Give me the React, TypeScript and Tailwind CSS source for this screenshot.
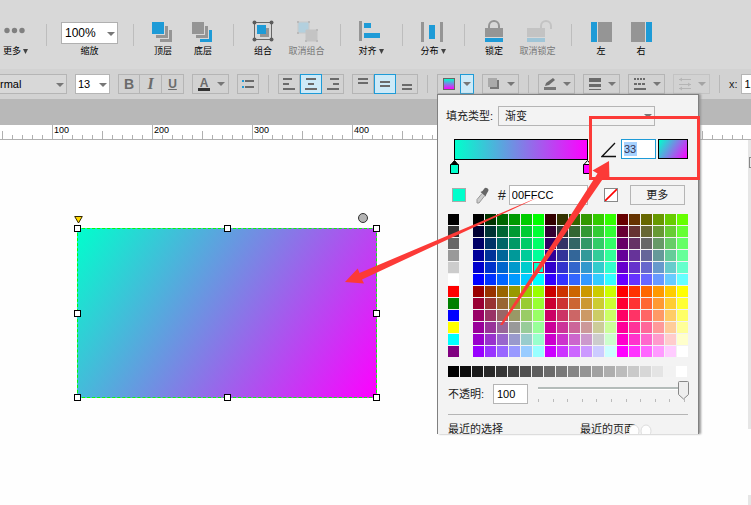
import React from "react";

type Kids = { children?: React.ReactNode };

const GRAY = "#959595";
const BLUE = "#1e9bd7";
const INK = "#6b6b6b";

function Divider() {
  return <div className="mt-[5px] mr-[9px] ml-[10px] h-[22px] w-px shrink-0 bg-[#bdbdbd]" />;
}

function Tool({ label, width = "w-10", menu, disabled, children }: Kids & { label: string; width?: string; menu?: boolean; disabled?: boolean }) {
  return (
    <button type="button" disabled={disabled} className={`flex shrink-0 flex-col items-center gap-px ${width}`}>
      <svg width="28" height="24" viewBox="0 0 28 24" aria-hidden="true" className={disabled ? "opacity-30" : ""}>
        {children}
      </svg>
      <span className={`flex items-center gap-[2px] text-[9px] leading-[14px] whitespace-nowrap ${disabled ? "text-[#777]" : "text-black"}`}>
        {label}
        {menu && <Caret small color="#444" />}
      </span>
    </button>
  );
}

function TopBar() {
  return (
    <header className="flex h-[69px] items-start overflow-hidden bg-[#d8d8d8] pt-[19px]">
      <Tool label="更多" menu width="w-9 pr-[5px]">
        <g fill="#808080">
          <circle cx="5" cy="11.500" r="2.700" />
          <circle cx="12.500" cy="11.500" r="2.700" />
          <circle cx="20" cy="11.500" r="2.700" />
        </g>
      </Tool>
      <Divider />
      <label className="flex w-[67px] shrink-0 flex-col items-center pt-[3px] text-[9px] leading-[14px] text-black">
        <span className="relative flex h-[22px] w-[57px]">
          <select className="w-full appearance-none border border-[#b0b0b0] bg-white pl-[3px] text-xs leading-4 text-black">
            <option>100%</option>
          </select>
          <Caret className="absolute top-[10px] right-[3px]" />
        </span>
        缩放
      </label>
      <Divider />
      <Tool label="顶层">
        <path d="M7 16h9V7h3v12H7z" fill={GRAY} />
        <path d="M11 20h9v-9h3v12H11z" fill={GRAY} />
        <path d="M3 3h12v12H3z" fill={BLUE} />
      </Tool>
      <Tool label="底层">
        <path d="M7 16h9V7h3v12H7z" fill={GRAY} />
        <path d="M11 20h9v-9h3v12H11z" fill={BLUE} />
        <path d="M3 3h12v12H3z" fill={GRAY} />
      </Tool>
      <Divider />
      <Tool label="组合">
        <path d="M11 9h9v9h-9z" fill={GRAY} />
        <path d="M8 6h9v9H8z" fill={BLUE} />
        <path d="M5.500 3.500h17v17h-17z" fill="none" stroke="#666" />
        <g fill="#5c5c5c">
          <circle cx="5.500" cy="3.500" r="2" />
          <circle cx="22.500" cy="3.500" r="2" />
          <circle cx="5.500" cy="20.500" r="2" />
          <circle cx="22.500" cy="20.500" r="2" />
        </g>
      </Tool>
      <Tool label="取消组合" width="w-[47px]" disabled>
        <path d="M5 3h11v11H5z" fill="#60c0ec" stroke="#aaa" />
        <path d="M13 11h11v11H13z" fill="#999" stroke="#999" />
        <path d="M4 2h2v2H4zM15 2h2v2h-2zM4 13h2v2H4zM23 10h2v2h-2zM12 21h2v2h-2zM23 21h2v2h-2z" fill="#777" />
      </Tool>
      <Divider />
      <Tool label="对齐" menu width="w-[42px]">
        <path d="M2 2h3v20H2z" fill={GRAY} />
        <path d="M7 4h7v5H7zM7 14h16v5H7z" fill={BLUE} />
      </Tool>
      <Divider />
      <Tool label="分布" menu width="w-[42px]">
        <path d="M2 3h3v20H2zM21 3h3v20h-3z" fill={GRAY} />
        <path d="M10 6h6v14h-6z" fill={BLUE} />
      </Tool>
      <Divider />
      <Tool label="锁定">
        <path d="M9 10V7a5 5 0 0 1 10 0v3" fill="none" stroke={GRAY} strokeWidth="2" />
        <path d="M5 9h18v9H5z" fill={GRAY} />
        <path d="M5 19h18v4H5z" fill={BLUE} />
      </Tool>
      <Tool label="取消锁定" width="w-[47px]" disabled>
        <path d="M17 10V7a5 5 0 0 1 10 0v3" fill="none" stroke={GRAY} strokeWidth="2" />
        <path d="M3 9h18v9H3z" fill={GRAY} />
        <path d="M3 19h18v4H3z" fill={BLUE} />
      </Tool>
      <Divider />
      <Tool label="左">
        <path d="M4 3h6v20H4z" fill={BLUE} />
        <path d="M11 3h14v20H11z" fill={GRAY} />
      </Tool>
      <Tool label="右">
        <path d="M4 3h14v20H4z" fill={GRAY} />
        <path d="M19 3h6v20h-6z" fill={BLUE} />
      </Tool>
    </header>
  );
}

function Caret({ className = "", color = "#777", small }: { className?: string; color?: string; small?: boolean }) {
  return (
    <svg width={small ? 5 : 8} height={small ? 5 : 4} viewBox="0 0 8 4" preserveAspectRatio="none" aria-hidden="true" className={`pointer-events-none shrink-0 ${className}`}>
      <path d="M0 0h8L4 4z" fill={color} />
    </svg>
  );
}

function Separator() {
  return <div className="mx-px h-[18px] w-px shrink-0 bg-[#b8b8b8]" />;
}

function Segment({ label, active, first, children }: Kids & { label: string; active?: boolean; first?: boolean }) {
  const look = active ? "border border-[#1e9bd7] bg-[#cdeaf8]" : first ? "border border-[#b5b5b5]" : "border-y border-r border-[#b5b5b5]";
  return (
    <button type="button" aria-label={label} className={`flex h-5 w-[22px] shrink-0 items-center justify-center text-[#6b6b6b] ${look}`}>
      {children}
    </button>
  );
}

function Lines({ d }: { d: string }) {
  return (
    <svg width="14" height="14" viewBox="0 0 14 14" aria-hidden="true" className="shrink-0">
      <path d={d} stroke={INK} strokeWidth="2" fill="none" />
    </svg>
  );
}

function MenuButton({ label, disabled, children }: Kids & { label: string; disabled?: boolean }) {
  return (
    <button type="button" aria-label={label} disabled={disabled} className={`flex h-5 w-[37px] shrink-0 items-center justify-between border border-[#b5b5b5] pr-[3px] pl-1 ${disabled ? "opacity-50" : ""}`}>
      {children}
      <Caret />
    </button>
  );
}

function FormatBar() {
  return (
    <div className="flex h-[30px] items-center gap-2 overflow-hidden bg-[#d2d2d2]">
      <div className="relative flex h-5 w-[67px] shrink-0">
        <select aria-label="字型" className="w-full appearance-none border-y border-r border-[#b5b5b5] bg-[#d8d8d8] text-[11px] text-black">
          <option>rmal</option>
        </select>
        <Caret className="absolute top-[9px] right-[3px]" />
      </div>
      <div className="relative flex h-5 w-[35px] shrink-0">
        <select aria-label="字号" className="w-full appearance-none border border-[#b5b5b5] bg-white pl-[2px] text-[11px] text-black">
          <option>13</option>
        </select>
        <Caret className="absolute top-[9px] right-[3px]" />
      </div>
      <div className="flex">
        <Segment label="粗体" first><b className="text-sm">B</b></Segment>
        <Segment label="斜体"><i className="font-['Liberation_Serif',serif] text-base font-bold">I</i></Segment>
        <Segment label="下划线"><span className="text-xs font-bold underline">U</span></Segment>
      </div>
      <MenuButton label="文字颜色">
        <span className="ml-px flex h-[13px] w-3 items-center justify-center border-b-3 border-[#333] text-xs leading-3 font-bold text-[#6b6b6b]">A</span>
      </MenuButton>
      <Segment label="项目符号" first>
        <svg width="14" height="14" viewBox="0 0 14 14" aria-hidden="true">
          <path d="M1 4h2M1 10h2" stroke={BLUE} strokeWidth="2" />
          <path d="M4 4h9M4 10h9" stroke={INK} strokeWidth="2" />
        </svg>
      </Segment>
      <Separator />
      <div className="flex">
        <Segment label="左对齐" first><Lines d="M1 2h9M1 7h6M1 12h12" /></Segment>
        <Segment label="居中" active><Lines d="M2 2h10M4 7h6M1 12h12" /></Segment>
        <Segment label="右对齐"><Lines d="M4 2h9M7 7h6M1 12h12" /></Segment>
      </div>
      <div className="flex">
        <Segment label="顶部对齐" first><Lines d="M2 2h10M2 6h10" /></Segment>
        <Segment label="垂直居中" active><Lines d="M2 5h10M2 9h10" /></Segment>
        <Segment label="底部对齐"><Lines d="M2 8h10M2 12h10" /></Segment>
      </div>
      <Separator />
      <div className="flex shrink-0">
        <button type="button" aria-label="填充颜色" className="flex h-5 w-[23px] items-center justify-center border-y border-l border-[#b5b5b5]">
          <span className="h-3 w-3 border border-[#666] bg-[linear-gradient(#00ffcc,#ff00ff)]" />
        </button>
        <button type="button" aria-label="填充选项" className="flex h-5 w-[14px] items-center justify-center border border-[#1e9bd7] bg-[#cdeaf8]">
          <Caret />
        </button>
      </div>
      <MenuButton label="阴影">
        <svg width="14" height="14" viewBox="0 0 14 14" aria-hidden="true">
          <path d="M3 3h9v9H3z" fill="#777" />
          <path d="M1 1h9v9H1z" fill="#aaa" />
        </svg>
      </MenuButton>
      <Separator />
      <MenuButton label="线条颜色">
        <svg width="14" height="14" viewBox="0 0 14 14" aria-hidden="true">
          <path d="M1 10h12v3H1z" fill="#777" />
          <path d="M2 9l1-3L10 1l2 2-6 5z" fill={INK} />
        </svg>
      </MenuButton>
      <MenuButton label="线宽">
        <svg width="14" height="14" viewBox="0 0 14 14" aria-hidden="true">
          <path d="M1 1h12v4H1zM1 7h12v3H1zM1 12h12v1H1z" fill={INK} />
        </svg>
      </MenuButton>
      <MenuButton label="线型">
        <svg width="14" height="14" viewBox="0 0 14 14" aria-hidden="true">
          <path d="M1 2h12" stroke={INK} strokeWidth="2" strokeDasharray="2 1" />
          <path d="M1 7h12" stroke={INK} strokeWidth="2" strokeDasharray="3 1" />
          <path d="M1 12h12" stroke={INK} strokeWidth="2" />
        </svg>
      </MenuButton>
      <MenuButton label="箭头样式" disabled>
        <svg width="14" height="14" viewBox="0 0 14 14" aria-hidden="true" fill="none" stroke="#999">
          <path d="M1 2.500h12M1 7.500h12M1 11.500h12M4 1L2 2.500 4 4M10 6l2 1.500L10 9M4 10l-2 1.500L4 13" />
        </svg>
      </MenuButton>
      <Separator />
      <label className="flex shrink-0 items-center gap-[3px] text-[11px] text-[#222]">
        x:
        <input defaultValue="127" className="h-5 w-10 border border-[#b5b5b5] bg-white px-[3px] text-[11px] text-black" />
      </label>
    </div>
  );
}

function Ruler() {
  const [width, setWidth] = React.useState(window.innerWidth);
  React.useEffect(() => {
    const update = () => setWidth(window.innerWidth);
    window.addEventListener("resize", update);
    return () => window.removeEventListener("resize", update);
  }, []);
  const ticks = Array.from({ length: Math.floor(width / 10) }, (_, i) => i);
  return (
    <div className="flex h-[15px] items-end overflow-hidden border-b border-[#b0b0b0] bg-white pl-[2px]">
      {ticks.map((i) => {
        const major = i % 10 === 5;
        const height = major ? "h-[14px]" : i % 5 === 0 ? "h-2" : "h-1";
        return (
          <div key={i} className={`w-[10px] shrink-0 border-l border-[#b0b0b0] ${height}`}>
            {major && <span className="block w-6 pl-px text-[9px] leading-[11px] text-black">{(i + 5) * 10}</span>}
          </div>
        );
      })}
    </div>
  );
}

function Handle({ place }: { place: string }) {
  return <span className={`absolute h-[7px] w-[7px] border border-black bg-white ${place}`} />;
}

function GradientShape() {
  return (
    <div className="absolute top-[88px] left-[77px] h-[170px] w-[300px] border border-dashed border-[#00ff00] bg-[linear-gradient(123deg,#00ffcc,#ff00ff)] bg-origin-border">
      <Handle place="-top-1 -left-1" />
      <Handle place="-top-1 left-[146px]" />
      <Handle place="-top-1 -right-1" />
      <Handle place="top-[81px] -left-1" />
      <Handle place="top-[81px] -right-1" />
      <Handle place="-bottom-1 -left-1" />
      <Handle place="-bottom-1 left-[146px]" />
      <Handle place="-right-1 -bottom-1" />
      <svg width="9" height="8" viewBox="0 0 9 8" aria-hidden="true" className="absolute -top-[13px] -left-1">
        <path d="M.7.500h7.600L4.500 7z" fill="#ffd800" stroke="#332800" />
      </svg>
      <span className="absolute -top-4 left-[280px] h-[10px] w-[10px] rounded-full border border-[#333] bg-[#b4b4b4]" />
    </div>
  );
}

const STEPS = ["00", "33", "66", "99", "cc", "ff"];
const BASICS = ["#000000", "#333333", "#666666", "#999999", "#cccccc", "#ffffff", "#ff0000", "#008000", "#0000ff", "#ffff00", "#00ffff", "#800080"];
const PALETTE = Array.from({ length: 12 }, (_, row) =>
  Array.from({ length: 18 }, (_, col) => `#${STEPS[Math.floor(col / 6) + (row > 5 ? 3 : 0)]}${STEPS[col % 6]}${STEPS[row % 6]}`),
);
const GRAYS = Array.from({ length: 20 }, (_, i) => {
  const v = Math.round((i * 255) / 19);
  return `rgb(${v}, ${v}, ${v})`;
});
const SLIDER_TICKS = Array.from({ length: 11 }, (_, i) => i * 10);

function Swatch({ color, selected }: { color: string; selected?: boolean }) {
  return <button type="button" aria-label={color} className={`h-[11px] w-[11px] ${selected ? "border border-[#c81e32]" : ""}`} style={{ backgroundColor: color }} />;
}

function Stop({ fill, tip, place }: { fill: string; tip: string; place: string }) {
  return (
    <svg width="9" height="14" viewBox="0 0 9 14" aria-hidden="true" className={`absolute top-5 ${place}`}>
      <path d="M4.500.500L8 4.500H1z" fill={tip} stroke="#000" />
      <path d="M.500 4.500h8v9h-8z" fill={fill} stroke="#000" />
    </svg>
  );
}

function FillPanel() {
  return (
    <section aria-label="填充" className="absolute top-[94px] left-[437px] h-[340px] w-[262px] overflow-hidden border-t border-r border-l border-[#808080] bg-[#f3f3f3] pr-[10px] pl-[10px] text-[11px] text-[#222] shadow-[2px_0_2px_#999]">
      <label className="mt-[11px] -ml-[2px] flex h-5 items-center">
        <span className="w-[52px] whitespace-nowrap">填充类型:</span>
        <span className="relative flex h-5 w-[157px]">
          <select className="w-full appearance-none border border-[#b5b5b5] bg-[#f3f3f3] pl-[6px] text-[11px]">
            <option>渐变</option>
          </select>
          <Caret className="absolute top-2 right-[3px]" />
        </span>
      </label>
      <div className="mt-[13px] flex h-[35px] items-start">
        <div className="relative ml-[6px] h-[21px] w-[134px] shrink-0 border border-black bg-[linear-gradient(90deg,#00ffcc,#ff00ff)]">
          <Stop fill="#00ffcc" tip="#000" place="-left-[5px]" />
          <Stop fill="#ff00ff" tip="#fff" place="-right-[5px]" />
        </div>
        <svg width="15" height="16" viewBox="0 0 15 16" aria-hidden="true" className="mt-[3px] ml-[13px] shrink-0">
          <path d="M14 1L1 14.500h14" fill="none" stroke="#111" strokeWidth="1.300" />
        </svg>
        <label className="ml-[5px] flex h-5 w-[35px] shrink-0 items-center border border-[#1e9bd7] bg-white pl-[2px]">
          <input aria-label="角度" defaultValue="33" size={1} className="h-[14px] w-[13px] bg-[#a6d2ff] text-[11px] text-[#335]" />
        </label>
        <span className="ml-[2px] h-5 w-[30px] shrink-0 border border-black bg-[linear-gradient(123deg,#00ffcc,#ff00ff)]" />
      </div>
      <div className="mt-[11px] flex h-5 items-center">
        <span className="ml-1 h-[14px] w-[14px] shrink-0 border border-[#aaa] bg-[#00ffcc]" />
        <svg width="14" height="17" viewBox="0 0 14 17" aria-hidden="true" className="ml-[9px] shrink-0">
          <path d="M7 6.500L2 12.500V16h2l5.500-7" fill="#ccc" stroke="#999" />
          <path d="M5.500 5l5 4.500 1-2.500 1.500-2.500a2.300 2.300 0 0 0-4-2.500L7.500 4z" fill="#666" />
        </svg>
        <label className="ml-[9px] flex shrink-0 items-center gap-[3px] text-sm">
          #
          <input defaultValue="00FFCC" className="h-5 w-[79px] border border-[#b5b5b5] bg-white pl-[2px] text-[11px] text-black" />
        </label>
        <button type="button" aria-label="无填充" className="ml-4 h-[14px] w-[14px] shrink-0 border border-[#888] bg-white">
          <svg width="12" height="12" viewBox="0 0 12 12" aria-hidden="true">
            <path d="M0 12L12 0" stroke="#f00" strokeWidth="1.600" />
          </svg>
        </button>
        <button type="button" className="ml-3 h-5 w-[55px] shrink-0 border border-[#b5b5b5]">更多</button>
      </div>
      <div className="mt-[9px] flex gap-[14px]">
        <div className="grid gap-px">
          {BASICS.map((c) => <Swatch key={c} color={c} />)}
        </div>
        <div className="grid grid-cols-[repeat(18,11px)] gap-px">
          {PALETTE.flatMap((row, r) => row.map((c, i) => <Swatch key={`${r}-${i}`} color={c} selected={r === 4 && i === 5} />))}
        </div>
      </div>
      <div className="mt-[9px] flex gap-px">
        {GRAYS.map((c) => <Swatch key={c} color={c} />)}
      </div>
      <div className="mt-[7px] flex h-5 items-center">
        <label htmlFor="opacity" className="w-[45px] shrink-0 whitespace-nowrap">不透明:</label>
        <input id="opacity" defaultValue="100" className="h-5 w-[35px] shrink-0 border border-[#b5b5b5] bg-white pl-[3px] text-[11px] text-black" />
        <div className="relative ml-[10px] h-5 w-[151px] shrink-0">
          <div className="mt-[3px] h-[3px] w-[146px] border-t-2 border-[#b4bcba] bg-white" />
          <div className="mt-[9px] flex w-[147px] justify-between">
            {SLIDER_TICKS.map((t) => <span key={t} className="h-[3px] w-px bg-[#bbb]" />)}
          </div>
          <input type="range" aria-label="不透明" defaultValue={100} className="absolute inset-0 m-0 w-full opacity-0" />
          <svg width="11" height="19" viewBox="0 0 11 19" aria-hidden="true" className="pointer-events-none absolute -top-[3px] right-0">
            <path d="M1.500.500h8q1 0 1 1v12L5.500 18 .500 13.500v-12q0-1 1-1z" fill="#eee" stroke="#888" />
          </svg>
        </div>
      </div>
      <div className="mt-[10px] flex border-t border-[#b5b5b5] pt-[6px] leading-4">
        <span className="w-[132px]">最近的选择</span>
        <span>最近的页面</span>
      </div>
      <svg width="24" height="10" viewBox="0 0 24 10" aria-hidden="true" className="absolute right-[45px] bottom-0">
        <ellipse cx="5" cy="7" rx="5" ry="6" fill="#fefefe" stroke="#ddd" />
        <ellipse cx="17" cy="7" rx="5" ry="6" fill="#fefefe" stroke="#ddd" />
      </svg>
    </section>
  );
}

function Annotations() {
  return (
    <svg width="751" height="505" viewBox="0 0 751 505" aria-hidden="true" className="pointer-events-none absolute top-0 left-0">
      <path d="M590.500 117.500h108v61h-108z" fill="none" stroke="#fc3a37" strokeWidth="3" />
      <path d="M345 282L357.700 268.500 359.500 273 541 196 362 279.500 364 283.500z" fill="#fc3a37" />
      <path d="M609 161L592.500 170.500 597.500 173.500 500 325 502.500 325 603.500 178 609.500 180z" fill="#fc3a37" />
    </svg>
  );
}

export default function App() {
  return (
    <div className="relative min-h-screen overflow-hidden bg-[#fefefe] font-['Liberation_Sans','Noto_Sans_CJK_SC',sans-serif]">
      <TopBar />
      <FormatBar />
      <div className="h-[26px] bg-[#b8b8b8]" />
      <Ruler />
      <main className="relative flex min-h-[365px] flex-col items-end">
        <GradientShape />
        <div className="h-[289px] w-[3px] bg-[#e6e6e6] pt-[17px] pl-px">
          <div className="h-[11px] border-y border-l border-[#888]" />
        </div>
        <div className="mt-[66px] h-[10px] w-[3px] bg-[#e6e6e6]" />
      </main>
      <FillPanel />
      <Annotations />
    </div>
  );
}
